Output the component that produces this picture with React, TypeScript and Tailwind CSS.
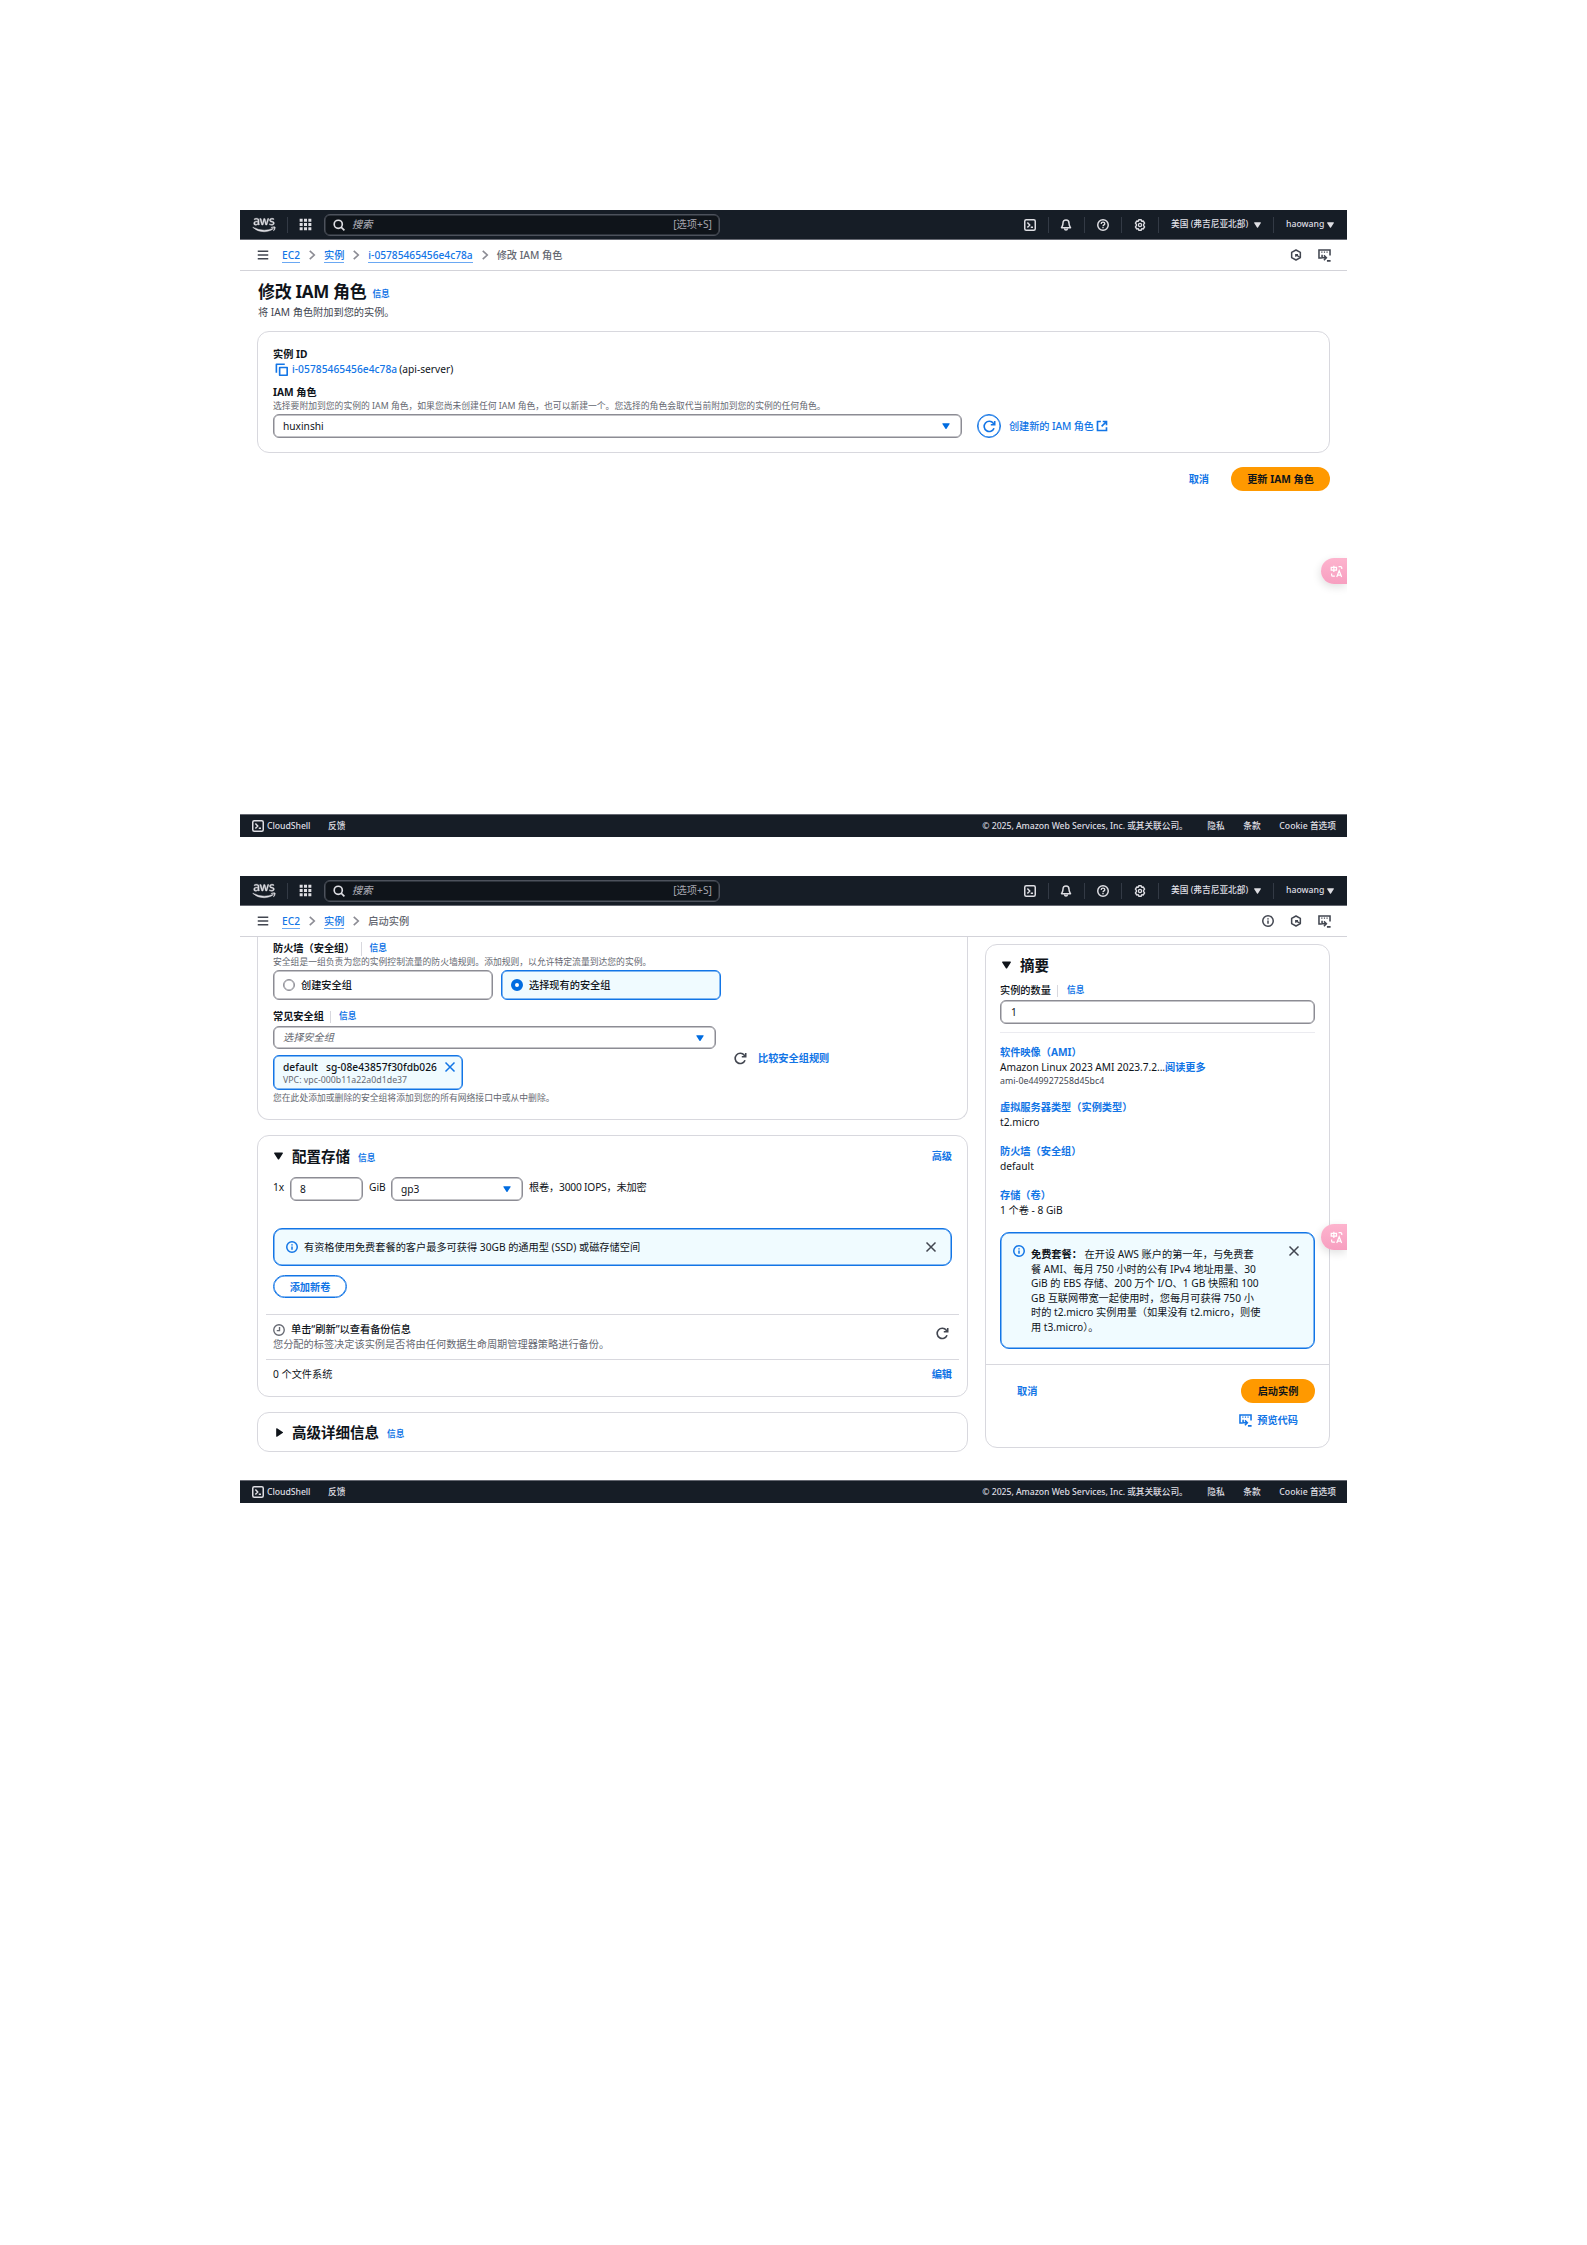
import React from "react";
import { FaAws } from "react-icons/fa";

type IconProps = { className?: string };

function Icon({ className = "", children }: IconProps & { children: React.ReactNode }) {
  return (
    <svg viewBox="0 0 16 16" fill="none" stroke="currentColor" strokeWidth="2" className={"block shrink-0 " + className}>
      {children}
    </svg>
  );
}

const Terminal = ({ className = "size-3" }: IconProps) => (
  <Icon className={className}>
    <rect x="1" y="1" width="14" height="14" rx="2" />
    <path d="M4.5 4.8 7.6 8l-3.1 3.2M9 11h3" />
  </Icon>
);
const Bell = () => (
  <Icon className="size-3">
    <path d="M8 1.200c-2.600 0-4 1.900-4 4.300C4 8.500 3 9.500 2 11.500h12c-1-2-2-3-2-6 0-2.400-1.400-4.300-4-4.300Z" strokeLinejoin="round" />
    <path d="M6 12.500c.2 1.600 1 2.200 2 2.200s1.800-.6 2-2.200" />
  </Icon>
);
const Help = () => (
  <Icon className="size-3">
    <circle cx="8" cy="8" r="7" />
    <path d="M5.600 6.500C5.600 5 6.600 4.200 8 4.200s2.400.9 2.400 2.100C10.400 7.900 8 7.900 8 9.700M8 10.800v1.600" strokeWidth="1.800" />
  </Icon>
);
const Gear = () => (
  <Icon className="size-3">
    <path d="M6.400 1.100h3.200l.7 2 2.100-.4L14.100 5.500 12.800 7.100v1.800l1.300 1.600-1.700 2.800-2.100-.4-.7 2H6.400l-.7-2-2.100.4-1.700-2.800L3.200 8.900V7.100L1.900 5.500l1.700-2.800 2.100.4z" strokeWidth="1.900" strokeLinejoin="round" />
    <circle cx="8" cy="8" r="2.100" strokeWidth="1.800" />
  </Icon>
);
const Search = () => (
  <Icon className="size-[12px]">
    <circle cx="7" cy="7" r="5.400" strokeWidth="2.200" />
    <path d="m10.800 10.800 4.400 4.400" strokeWidth="2.200" />
  </Icon>
);
const Apps = () => (
  <svg viewBox="0 0 16 16" fill="currentColor" className="block size-[13px] shrink-0">
    <path d="M.8.8h3.700v3.700H.8zM6.150.8h3.700v3.700h-3.700zM11.500.8h3.700v3.700h-3.700zM.8 6.150h3.700v3.700H.8zM6.150 6.150h3.700v3.700h-3.700zM11.500 6.150h3.700v3.700h-3.700zM.8 11.500h3.700v3.700H.8zM6.150 11.500h3.700v3.700h-3.700zM11.500 11.500h3.700v3.700h-3.700z" />
  </svg>
);
const Menu = () => (
  <Icon className="h-[12px] w-[12px]">
    <path d="M1 3h14M1 8h14M1 13h14" />
  </Icon>
);
const Chevron = () => (
  <Icon className="size-3">
    <path d="m5 2.500 6 5.500-6 5.500" strokeWidth="2.200" />
  </Icon>
);
const InfoIcon = ({ className = "size-3" }: IconProps) => (
  <Icon className={className}>
    <circle cx="8" cy="8" r="7" />
    <path d="M8 7.200v4.300M8 4.300v1.700" />
  </Icon>
);
const Hex = () => (
  <Icon className="size-3">
    <path d="M8 1.300 13.800 4.600v6.800L8 14.700 2.200 11.400V4.600z" strokeLinejoin="round" />
    <path d="m8 7.800 5.200 3.200M7.700 10.300V7.400h3" strokeWidth="1.800" />
  </Icon>
);
const CodeScreen = () => (
  <Icon className="size-[13px]">
    <path d="M4.500 11H1.200V1.200h13.600V8" strokeWidth="1.900" />
    <path d="M4 3.900h1.500M7.200 3.900h1.500M10.400 3.900h1.500" strokeWidth="1.600" />
    <path d="M5 7v3.800h4.500M7.300 7.800l3 3-3 3M11 14.600h4.500" strokeWidth="1.900" />
  </Icon>
);
const Copy = () => (
  <Icon className="size-[13px]">
    <path d="M5.700 5.500H15V15H5.700zM1.700 12V1.500H12" strokeLinejoin="round" />
  </Icon>
);
const Refresh = () => (
  <Icon className="size-[13px]">
    <path d="M13.600 10.200A6.300 6.300 0 1 1 12.700 4L14 5.500" />
    <path d="M14.400 1.300v4.600H9.600" />
  </Icon>
);
const External = () => (
  <Icon className="size-3">
    <path d="M6.500 2H2v12h12V9.500" strokeWidth="2.200" />
    <path d="M9 2h5v5M14 2 7.500 8.500" strokeWidth="2.200" />
  </Icon>
);
const Clock = () => (
  <Icon className="size-3">
    <circle cx="8" cy="8" r="7" strokeWidth="1.800" />
    <path d="M8.700 4v4.800H5" strokeWidth="1.800" />
  </Icon>
);
const Close = ({ className = "size-3" }: IconProps) => (
  <Icon className={className}>
    <path d="m2 2 12 12M14 2 2 14" />
  </Icon>
);
const Down = ({ className = "" }: IconProps) => (
  <svg viewBox="0 0 10 8" fill="currentColor" className={"block shrink-0 " + className}>
    <path d="M.8.2h8.400a.7.7 0 0 1 .6 1L5.700 7.600a.8.8 0 0 1-1.400 0L.2 1.200a.7.7 0 0 1 .6-1z" />
  </svg>
);

function Bar({ className = "" }: IconProps) {
  return <div className={"w-px shrink-0 " + className} />;
}

const grayBox = "border border-[#8c8c94] shadow-[inset_0_0_0_0.5px_#8c8c94]";
const blueBox = "border border-[#1275e6] shadow-[inset_0_0_0_0.5px_#1275e6]";

function TopBar() {
  return (
    <header className="flex h-[30px] shrink-0 items-center border-b border-[#656871] bg-[#161d26] text-[#dedee3]">
      <FaAws className="ml-[12px] block h-[18px] w-[24px] shrink-0" stroke="currentColor" strokeWidth="12" />
      <Bar className="ml-[11px] h-4 bg-[#333a45]" />
      <div className="ml-[11px]"><Apps /></div>
      <div className="ml-[12px] flex h-[22px] w-[396px] items-center rounded-[6px] border border-[#4d525c] bg-[#0f141a] pl-2 pr-[7px] shadow-[inset_0_0_0_0.5px_#4d525c]">
        <Search />
        <span className="ml-[7px] flex-1 font-medium italic text-[#a4a4ad]">搜索</span>
        <span className="tracking-[0.050px] text-[#a4a4ad]">[选项+S]</span>
      </div>
      <div className="ml-auto flex items-center text-[8.700px] font-medium">
        <Terminal />
        <Bar className="ml-3 mr-[11px] h-4 bg-[#333a45]" />
        <Bell />
        <Bar className="mx-3 h-4 bg-[#333a45]" />
        <Help />
        <Bar className="mx-3 h-4 bg-[#333a45]" />
        <Gear />
        <Bar className="mx-3 h-4 bg-[#333a45]" />
        <span className="w-[83px] whitespace-nowrap">美国 (弗吉尼亚北部)</span>
        <Down className="h-[6px] w-[7px]" />
        <Bar className="ml-[12px] mr-3 h-4 bg-[#333a45]" />
        <span className="w-[41px]">haowang</span>
        <Down className="mr-[13px] h-[6px] w-[7px]" />
      </div>
    </header>
  );
}

function Crumb({ children }: { children: React.ReactNode }) {
  return <a className="h-[15px] border-b border-[#6aa8f3] font-medium leading-[14px] text-[#1275e6]">{children}</a>;
}

function Crumbs({ trail, current, info }: { trail: string[]; current: string; info?: boolean }) {
  return (
    <nav className="flex h-[31px] shrink-0 items-center border-b border-[#d3d3d9] pl-[17px] pr-[16px] text-[#656871]">
      <span className="mr-[13px] text-[#424650]"><Menu /></span>
      {trail.map((t) => (
        <React.Fragment key={t}>
          <Crumb>{t}</Crumb>
          <span className="mx-[6px] text-[#8c8c94]"><Chevron /></span>
        </React.Fragment>
      ))}
      <span className="font-medium">{current}</span>
      <div className="ml-auto flex items-center gap-4 text-[#424650]">
        {info && <InfoIcon />}
        <Hex />
        <CodeScreen />
      </div>
    </nav>
  );
}

function Footer() {
  return (
    <footer className="mt-auto flex h-[23px] shrink-0 items-center border-t border-[#656871] bg-[#161d26] pl-3 pr-[11px] text-[8.700px] font-medium text-[#dedee3]">
      <Terminal />
      <span className="ml-[3px] w-[61px] tracking-[-0.050px]">CloudShell</span>
      <span>反馈</span>
      <span className="ml-auto w-[225px] whitespace-nowrap tracking-[-0.050px]">© 2025, Amazon Web Services, Inc. 或其关联公司。</span>
      <span className="w-[36px]">隐私</span>
      <span className="w-[36px]">条款</span>
      <span>Cookie 首选项</span>
    </footer>
  );
}

function Translate({ className }: { className: string }) {
  return (
    <div className={"absolute right-0 flex h-[26px] w-[26px] items-center justify-center rounded-l-full bg-gradient-to-b from-[#fdb4ce] to-[#f79fc0] shadow-[-1px_3px_8px_rgba(0,0,0,0.12)] " + className}>
      <svg viewBox="0 0 16 16" fill="none" stroke="white" strokeWidth="1.500" className="ml-1 block size-[13px]">
        <path d="M1.500 2.800h6.500v3.400H1.500zM4.750 1v7.500M10.500 2h2.500q1.500 0 1.500 1.500V5M2 10.500v1.700q0 1.600 1.600 1.600H6M8.300 14.800l3-7.800 3 7.800M9.300 12.500h4" />
      </svg>
    </div>
  );
}

const InfoLink = ({ className = "" }: IconProps) => <a className={"text-[8.700px] font-bold text-[#1275e6] " + className}>信息</a>;

function IamPage() {
  return (
    <section className="relative flex h-[627px] w-[1107px] flex-col overflow-hidden bg-white">
      <TopBar />
      <Crumbs trail={["EC2", "实例", "i-05785465456e4c78a"]} current="修改 IAM 角色" />
      <div className="flex flex-col pl-[17px] pr-[17px]">
        <div className="mt-2 flex h-6 items-center">
          <h1 className="ml-px mt-px text-[17px] font-bold leading-6 tracking-[-0.320px]">修改 IAM 角色</h1>
          <InfoLink className="ml-[6px] mt-[6px]" />
        </div>
        <p className="ml-px mt-px h-4 leading-4 text-[#424650]">将 IAM 角色附加到您的实例。</p>
        <div className="mt-[11px] flex h-[122px] flex-col rounded-[12px] border border-[#d8d8de] pl-[15px] pr-[15px]">
          <div className="mt-[15px] h-[15px] font-bold leading-[15px]">实例 ID</div>
          <div className="flex h-[15px] items-center pl-[2px]">
            <span className="text-[#1275e6]"><Copy /></span>
            <span className="ml-1 font-medium tracking-[0.050px] text-[#1275e6]">i-05785465456e4c78a</span>
            <span className="ml-[2px]">(api-server)</span>
          </div>
          <div className="mt-2 h-[15px] font-bold leading-[15px]">IAM 角色</div>
          <div className="h-[12px] text-[8.800px] leading-[12px] text-[#656871]">选择要附加到您的实例的 IAM 角色，如果您尚未创建任何 IAM 角色，也可以新建一个。您选择的角色会取代当前附加到您的实例的任何角色。</div>
          <div className="mt-[2px] flex items-center">
            <div className={"flex h-6 w-[689px] items-center justify-between rounded-[6px] pl-[9px] pr-[11px] " + grayBox}>
              <span>huxinshi</span>
              <Down className="h-[6px] w-2 text-[#006ce0]" />
            </div>
            <div className={"ml-[15px] flex size-6 items-center justify-center rounded-full text-[#1275e6] " + blueBox}><Refresh /></div>
            <span className="ml-2 mr-[2px] font-medium tracking-[-0.100px] text-[#1275e6]">创建新的 IAM 角色</span>
            <span className="text-[#1275e6]"><External /></span>
          </div>
        </div>
        <div className="mt-[14px] flex items-center justify-end">
          <span className="mr-[22px] font-bold text-[#1275e6]">取消</span>
          <button className="h-6 w-[99px] rounded-full bg-[#ff9900] font-bold">更新 IAM 角色</button>
        </div>
      </div>
      <Translate className="top-[348px]" />
      <Footer />
    </section>
  );
}

function LeftColumn() {
  return (
    <div className="flex w-[711px] flex-col">
      <div className="flex h-[183px] flex-col rounded-b-[12px] border border-t-0 border-[#d8d8de] pl-[15px]">
        <div className="mt-1 flex h-[15px] items-center">
          <b>防火墙（安全组）</b>
          <Bar className="ml-[6px] mr-2 h-[14px] bg-[#d8d8de]" />
          <InfoLink />
        </div>
        <div className="h-[12px] text-[8.800px] leading-[12px] text-[#656871]">安全组是一组负责为您的实例控制流量的防火墙规则。添加规则，以允许特定流量到达您的实例。</div>
        <div className="mt-[2px] flex gap-2">
          <div className={"flex h-[30px] w-[220px] items-center rounded-[6px] pl-[9px] " + grayBox}>
            <span className={"mr-[6px] size-3 rounded-full " + grayBox} />
            <span className="font-medium">创建安全组</span>
          </div>
          <div className={"flex h-[30px] w-[220px] items-center rounded-[6px] bg-[#f0fbff] pl-[9px] " + blueBox}>
            <span className="mr-[6px] size-3 rounded-full border-[4px] border-[#006ce0] bg-white" />
            <span className="font-medium">选择现有的安全组</span>
          </div>
        </div>
        <div className="mt-[9px] flex h-[15px] items-center">
          <b>常见安全组</b>
          <Bar className="ml-[6px] mr-2 h-3 bg-[#d8d8de]" />
          <InfoLink />
        </div>
        <div className="flex">
          <div className="mt-[2px] flex w-[443px] flex-col">
            <div className={"flex h-[23px] items-center justify-between rounded-[6px] pl-[9px] pr-[11px] " + grayBox}>
              <span className="italic text-[#656871]">选择安全组</span>
              <Down className="h-[6px] w-2 text-[#006ce0]" />
            </div>
            <div className={"mt-[6px] flex h-[35px] w-[190px] justify-between rounded-[6px] bg-[#f0fbff] pl-[9px] pr-[6px] " + blueBox}>
              <div className="flex flex-col pt-1">
                <span className="h-[14px] whitespace-nowrap font-medium leading-[14px] tracking-[0.040px]">default<span className="ml-[8px]">sg-08e43857f30fdb026</span></span>
                <span className="h-[13px] text-[8.800px] leading-[13px] text-[#656871]">VPC: vpc-000b11a22a0d1de37</span>
              </div>
              <span className="mt-[5px] text-[#1275e6]"><Close /></span>
            </div>
            <div className="mt-[2px] h-[13px] text-[8.800px] leading-[13px] text-[#656871]">您在此处添加或删除的安全组将添加到您的所有网络接口中或从中删除。</div>
          </div>
          <div className="ml-[18px] mt-[27px] flex h-[14px] items-center">
            <span className="text-[#424650]"><Refresh /></span>
            <span className="ml-[11px] font-bold text-[#1275e6]">比较安全组规则</span>
          </div>
        </div>
      </div>

      <div className="mt-[15px] flex h-[262px] flex-col rounded-[12px] border border-[#d8d8de] px-2">
        <div className="mt-[10px] flex h-5 items-center px-[7px]">
          <Down className="ml-[1px] h-2 w-[9px]" />
          <h2 className="ml-[9px] text-[14.500px] font-bold leading-5">配置存储</h2>
          <InfoLink className="ml-2 mt-1" />
          <span className="ml-auto font-bold text-[#1275e6]">高级</span>
        </div>
        <div className="mt-[11px] flex h-6 items-center px-[7px]">
          <span className="mb-[3px] w-[17px]">1x</span>
          <div className={"flex h-6 w-[73px] items-center rounded-[6px] pl-[9px] " + grayBox}>8</div>
          <span className="mb-[3px] ml-[6px] w-[22px]">GiB</span>
          <div className={"flex h-6 w-[132px] items-center justify-between rounded-[6px] pl-[9px] pr-[11px] " + grayBox}>
            <span>gp3</span>
            <Down className="h-[6px] w-2 text-[#006ce0]" />
          </div>
          <span className="mb-[3px] ml-[6px] tracking-[-0.180px]">根卷，3000 IOPS，未加密</span>
        </div>
        <div className={"mx-[7px] mt-[27px] flex h-[38px] items-center rounded-[9px] bg-[#f0fbff] pl-3 pr-[14px] " + blueBox}>
          <span className="text-[#1275e6]"><InfoIcon /></span>
          <span className="ml-[6px] flex-1">有资格使用免费套餐的客户最多可获得 30GB 的通用型 (SSD) 或磁存储空间</span>
          <span className="text-[#424650]"><Close /></span>
        </div>
        <button className={"mx-[7px] mt-[9px] h-[23px] w-[74px] rounded-full font-bold leading-[20px] text-[#1275e6] " + blueBox}>添加新卷</button>
        <div className="mt-4 flex h-[45px] items-center justify-between border-t border-[#d8d8de] pl-[7px] pr-[10px]">
          <div>
            <div className="flex h-[15px] items-center">
              <span className="mr-[6px] text-[#656871]"><Clock /></span>
              <span className="font-medium">单击“刷新”以查看备份信息</span>
            </div>
            <div className="h-[15px] leading-[15px] text-[#656871]">您分配的标签决定该实例是否将由任何数据生命周期管理器策略进行备份。</div>
          </div>
          <span className="mb-[7px] text-[#424650]"><Refresh /></span>
        </div>
        <div className="flex h-[30px] items-center justify-between border-t border-[#d8d8de] px-[7px]">
          <span>0 个文件系统</span>
          <span className="font-bold text-[#1275e6]">编辑</span>
        </div>
      </div>

      <div className="mt-[15px] flex h-[40px] items-center rounded-[12px] border border-[#d8d8de] px-[17px]">
        <Down className="h-[7px] w-[9px] -rotate-90" />
        <h2 className="ml-[8px] text-[14.500px] font-bold leading-5">高级详细信息</h2>
        <InfoLink className="ml-2 mt-1" />
      </div>
    </div>
  );
}

function SummaryItem({ title, children }: { title: string; children: React.ReactNode }) {
  return (
    <div className="mb-[14px]">
      <div className="h-[15px] font-bold leading-[15px] text-[#1275e6]">{title}</div>
      <div className="h-[15px] leading-[15px]">{children}</div>
    </div>
  );
}

const freeTier = [
  "餐 AMI、每月 750 小时的公有 IPv4 地址用量、30",
  "GiB 的 EBS 存储、200 万个 I/O、1 GB 快照和 100",
  "GB 互联网带宽一起使用时，您每月可获得 750 小",
  "时的 t2.micro 实例用量（如果没有 t2.micro，则使",
  "用 t3.micro）。",
];

function Summary() {
  return (
    <aside className="mt-[7px] flex h-[504px] w-[345px] flex-col rounded-[12px] border border-[#d8d8de]">
      <div className="flex flex-col px-[14px]">
        <div className="mt-[10px] flex h-5 items-center">
          <Down className="ml-[2px] h-2 w-[9px]" />
          <h2 className="ml-[9px] text-[14.500px] font-bold leading-5">摘要</h2>
        </div>
        <div className="mt-2 flex h-[15px] items-center">
          <span className="font-medium">实例的数量</span>
          <Bar className="ml-[6px] mr-[9px] h-3 bg-[#d8d8de]" />
          <InfoLink />
        </div>
        <div className={"mt-[2px] flex h-6 items-center rounded-[6px] pl-[10px] " + grayBox}>1</div>
        <div className="mb-[12px] mt-2 h-px bg-[#ebebf0]" />
        <SummaryItem title="软件映像（AMI）">
          <span className="whitespace-nowrap tracking-[-0.050px]">Amazon Linux 2023 AMI 2023.7.2...<b className="text-[#1275e6]">阅读更多</b></span>
        </SummaryItem>
        <div className="-mt-[14px] mb-[12px] h-[13px] text-[8.800px] leading-[12px] tracking-[0.030px] text-[#424650]">ami-0e449927258d45bc4</div>
        <SummaryItem title="虚拟服务器类型（实例类型）">t2.micro</SummaryItem>
        <SummaryItem title="防火墙（安全组）">default</SummaryItem>
        <SummaryItem title="存储（卷）">1 个卷 - 8 GiB</SummaryItem>
        <div className={"flex h-[117px] rounded-[9px] bg-[#f0fbff] pl-3 " + blueBox}>
          <span className="mt-[12px] text-[#1275e6]"><InfoIcon /></span>
          <div className="ml-[6px] mt-[14px] w-[250px] whitespace-nowrap leading-[14.600px]">
            <div><b>免费套餐：</b> 在开设 AWS 账户的第一年，与免费套</div>
            {freeTier.map((l) => <div key={l}>{l}</div>)}
          </div>
          <span className="ml-[7px] mt-[12px] text-[#424650]"><Close /></span>
        </div>
      </div>
      <div className="mt-[15px] flex flex-col border-t border-[#d8d8de] px-[14px] pt-[14px]">
        <div className="flex items-center justify-between pl-[17px]">
          <span className="font-bold text-[#1275e6]">取消</span>
          <button className="h-6 w-[74px] rounded-full bg-[#ff9900] font-bold">启动实例</button>
        </div>
        <div className="mt-[10px] flex h-[15px] items-center justify-end pr-[17px] text-[#1275e6]">
          <CodeScreen />
          <span className="ml-[5px] font-bold">预览代码</span>
        </div>
      </div>
    </aside>
  );
}

function LaunchPage() {
  return (
    <section className="relative mt-[39px] flex h-[627px] w-[1107px] flex-col overflow-hidden bg-white">
      <TopBar />
      <Crumbs trail={["EC2", "实例"]} current="启动实例" info />
      <div className="flex gap-[17px] pl-[17px]">
        <LeftColumn />
        <Summary />
      </div>
      <Translate className="top-[348px]" />
      <Footer />
    </section>
  );
}

export default function App() {
  return (
    <main className="flex h-[2245px] w-[1587px] flex-col overflow-hidden bg-white pl-[240px] pt-[210px] font-['Noto_Sans','Noto_Sans_CJK_SC',sans-serif] text-[10.200px] leading-[15px] text-[#0f141a]">
      <IamPage />
      <LaunchPage />
    </main>
  );
}
